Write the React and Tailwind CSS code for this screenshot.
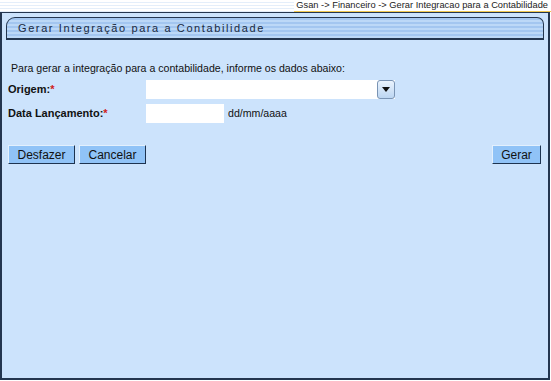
export default function App() {
  const font = { fontFamily: '"Liberation Sans", Arial, sans-serif' }

  return (
    <div className="w-[551px] h-[381px] bg-white overflow-hidden" style={font}>
      {/* breadcrumb band */}
      <div className="h-[12px] flex justify-end items-start bg-[repeating-linear-gradient(#ffffff_0_2px,#e4eefa_2px_3px)]">
        <span className="bg-white border-b border-[#f0c850] text-[9.3px] leading-[11px] text-[#222] pr-[3px] pl-[2px]">
          Gsan -&gt; Financeiro -&gt; Gerar Integracao para a Contabilidade
        </span>
      </div>

      {/* main panel */}
      <div className="w-[550px] h-[368px] bg-[#cce3fc] border-t border-l-2 border-r-2 border-b-2 border-[#24364f] pt-[4px] pl-[4px]">
        <div className="w-[538px] h-[23px] rounded-tl-[9px] rounded-tr-[7px] border border-b-2 border-[#24364f] bg-[repeating-linear-gradient(#a3c6f0_0_2px,#bcd8f7_2px_4px)] flex items-center pl-[11px]">
          <span className="text-[11px] tracking-[1.6px] text-[#1b2a3f]">
            Gerar Integração para a Contabilidade
          </span>
        </div>

        <p className="mt-[21px] ml-[5px] text-[10.6px] leading-[14px] text-[#111]">
          Para gerar a integração para a contabilidade, informe os dados abaixo:
        </p>

        <div className="mt-[5px] flex flex-col gap-[5px]">
          <div className="flex items-center h-[19px]">
            <span className="w-[138px] ml-[2px] text-[11px] font-bold text-[#111]">
              Origem:<span className="text-[#d02020]">*</span>
            </span>
            <div className="w-[249px] h-[19px] bg-white flex justify-end">
              <div className="w-[18px] h-[19px] rounded-[3px] border border-[#7a94b4] bg-[linear-gradient(#eaf3fd,#bcd6f2)] flex items-center justify-center">
                <svg width="8" height="5" viewBox="0 0 8 5">
                  <path d="M0 0h8L4 5z" fill="#111" />
                </svg>
              </div>
            </div>
          </div>
          <div className="flex items-center h-[19px]">
            <span className="w-[138px] ml-[2px] text-[11px] font-bold text-[#111]">
              Data Lançamento:<span className="text-[#d02020]">*</span>
            </span>
            <div className="w-[78px] h-[19px] bg-white" />
            <span className="ml-[4px] text-[10.6px] text-[#111]">dd/mm/aaaa</span>
          </div>
        </div>

        <div className="mt-[22px] mr-[7px] ml-[2px] flex items-center">
          <button className="w-[67px] h-[19px] bg-[#90c3f7] border border-[#e3f0fd] border-r-[#1d3350] border-b-[#1d3350] text-[12px] text-[#111] leading-[16px]">
            Desfazer
          </button>
          <button className="ml-[4px] w-[67px] h-[19px] bg-[#90c3f7] border border-[#e3f0fd] border-r-[#1d3350] border-b-[#1d3350] text-[12px] text-[#111] leading-[16px]">
            Cancelar
          </button>
          <button className="ml-auto w-[49px] h-[19px] bg-[#90c3f7] border border-[#e3f0fd] border-r-[#1d3350] border-b-[#1d3350] text-[12px] text-[#111] leading-[16px]">
            Gerar
          </button>
        </div>
      </div>
    </div>
  )
}
